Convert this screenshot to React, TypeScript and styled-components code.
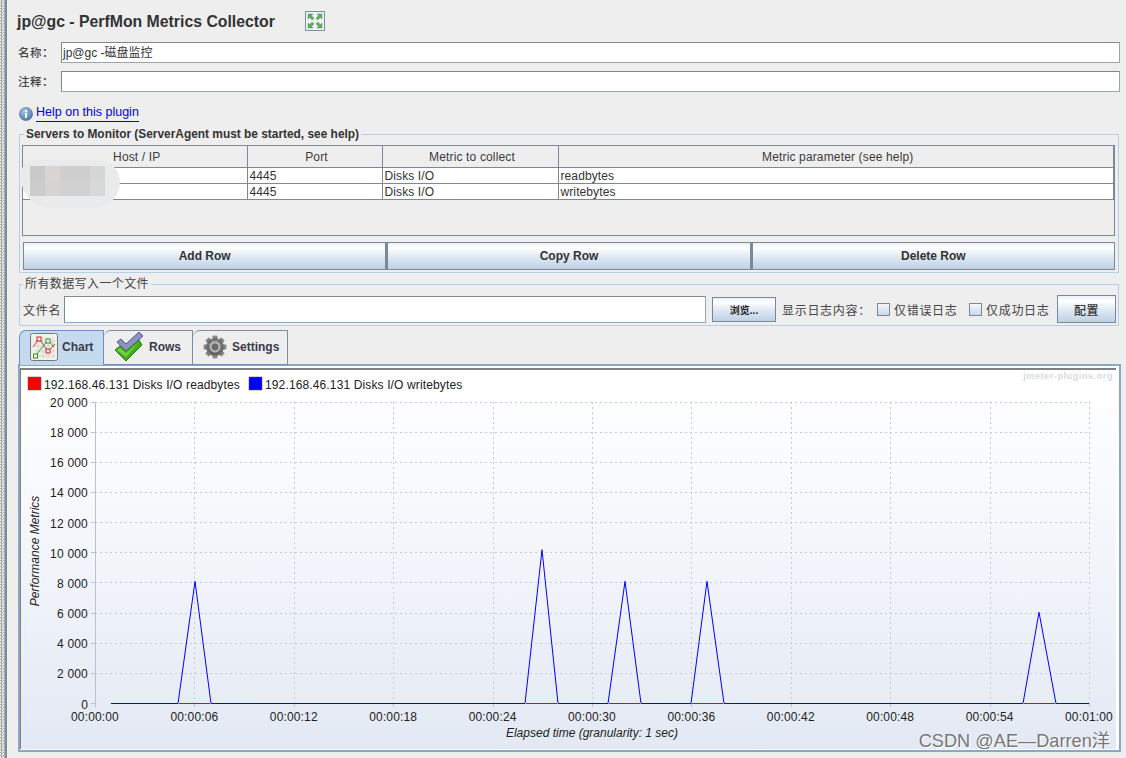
import React from "react";
import styled, { createGlobalStyle } from "styled-components";

const FONT = `"Liberation Sans", Arial, "Noto Sans CJK SC", sans-serif`;

const Global = createGlobalStyle`
  html, body { margin: 0; padding: 0; background: #eeeeee; overflow: hidden; }
  body { font-family: ${FONT}; color: #333; }
  * { box-sizing: border-box; }
`;

const Page = styled.div`
  display: flex;
  width: 1126px;
  height: 758px;
  overflow: hidden;
  background: #eeeeee;
`;
const Strip = styled.div`
  width: 7px;
  flex: none;
  border-right: 2px solid #7c8c9d;
  background: repeating-conic-gradient(#a9a9a9 0 25%, #eeeeee 0 50%) 0 0 / 3px 3px;
`;
const Main = styled.div`
  flex: 1;
  min-width: 0;
  padding: 0 7px 0 12px;
  display: flex;
  flex-direction: column;
`;
const TitleRow = styled.div`
  height: 42px;
  flex: none;
  display: flex;
  align-items: flex-start;
  padding-top: 11px;
`;
const Title = styled.h1`
  margin: 2px 30px 0 -2px;
  font-size: 15.82px;
  line-height: 18px;
  font-weight: 700;
  color: #333;
  white-space: nowrap;
`;
const ExpandBox = styled.span`
  display: block;
  width: 20px;
  height: 20px;
  svg { display: block; }
`;
const FieldRow = styled.div`
  display: flex;
  align-items: center;
  height: 21px;
  margin: 0 -1px 8px -1px;
  flex: none;
`;
const FieldLabel = styled.label`
  width: 43px;
  flex: none;
  margin-top: -1px;
  font-size: 11.5px;
  font-weight: 500;
  color: #444;
  letter-spacing: 0.5px;
`;
const TextBox = styled.div`
  flex: 1;
  height: 100%;
  background: #fff;
  border: 1px solid #9aa5b1;
  border-top: 1px solid #7c8896;
  border-left: 1px solid #7c8896;
  padding: 1px 0 0 1px;
  font-size: 12px;
  line-height: 19px;
  color: #333;
  white-space: nowrap;
`;
const HelpRow = styled.div`
  height: 16px;
  flex: none;
  margin-top: 6px;
  display: flex;
  align-items: flex-start;
  svg { display: block; margin-top: 1px; flex: none; }
`;
const HelpLink = styled.a`
  margin-left: 3px;
  font-size: 12.5px;
  line-height: 12px;
  height: 16px;
  color: #0000ee;
  border-bottom: 1px solid #0000ee;
  white-space: nowrap;
`;
const Group = styled.fieldset<{ $h: number; $mt: number }>`
  margin: ${(p) => p.$mt}px 0 0;
  padding: 4px 2px 0;
  min-width: 0;
  height: ${(p) => p.$h}px;
  flex: none;
  border: 1px solid #b7cfe6;
`;
const BoldLegend = styled.legend`
  margin-left: 2px;
  padding: 0 2px;
  line-height: 14px;
  font-size: 11.9px;
  font-weight: 700;
  color: #333;
  white-space: nowrap;
`;
const CjkLegend = styled.legend`
  margin-left: 1px;
  padding: 0 2px;
  line-height: 14px;
  font-size: 12px;
  letter-spacing: 0.4px;
  color: #444;
  white-space: nowrap;
`;
const TableBox = styled.div`
  position: relative;
  height: 91px;
  background: #eeeeee;
  border: 1px solid #7c8896;
  margin-right: 1px;
`;
const Table = styled.table`
  width: 100%;
  table-layout: fixed;
  border-collapse: collapse;
  font-size: 12px;
  letter-spacing: 0.1px;
`;
const HeadCell = styled.th`
  height: 21px;
  padding: 2px 0 0 4px;
  font-weight: 400;
  text-align: center;
  color: #3a3a3a;
  letter-spacing: 0.15px;
  border-right: 1px solid #7c8896;
  border-bottom: 1px solid #7c8896;
`;
const Cell = styled.td`
  height: 16px;
  padding: 1px 0 0 2px;
  background: #fff;
  color: #333;
  line-height: 14px;
  border-right: 1px solid #7c8896;
  border-bottom: 1px solid #7c8896;
`;
const Blob = styled.div`
  position: absolute;
  left: -2px;
  top: 14px;
  width: 99px;
  height: 48px;
  border-radius: 14px 22px 26px 30px;
  background: #e9eaeb;
  display: grid;
  grid-template-columns: 15px 15px 30px 15px;
  grid-template-rows: 15px 15px;
  padding: 6px 0 0 9px;
`;
const Mosaic = styled.span<{ $c: string }>`
  background: ${(p) => p.$c};
`;
const ButtonRow = styled.div`
  display: flex;
  margin: 6px 1px 0 1px;
  height: 28px;
`;
const GRAD = "linear-gradient(#eaf0f7 0%, #ffffff 18%, #dde8f3 55%, #bed1e5 100%)";
const RowButton = styled.button`
  flex: 1;
  height: 100%;
  margin: 0;
  padding: 0;
  background: ${GRAD};
  border: 1px solid #7c8896;
  font: 700 12px ${FONT};
  color: #333;
  & + & { border-left-width: 2px; }
`;
const FileRow = styled.div`
  display: flex;
  align-items: center;
  height: 28px;
  padding-left: 1px;
`;
const CjkText = styled.span<{ $w: number }>`
  width: ${(p) => p.$w}px;
  flex: none;
  font-size: 12px;
  letter-spacing: 0.7px;
  color: #444;
  white-space: nowrap;
`;
const FileInput = styled.div`
  width: 642px;
  height: 27px;
  flex: none;
  background: #fff;
  border: 1px solid #9aa5b1;
  border-top-color: #7c8896;
  border-left-color: #7c8896;
`;
const BrowseButton = styled.button`
  width: 64px;
  height: 25px;
  flex: none;
  margin: 1px 6px 0;
  padding: 0;
  background: ${GRAD};
  border: 1px solid #7c8896;
  font: 700 10px ${FONT};
  color: #222;
`;
const Check = styled.span`
  width: 13px;
  height: 13px;
  flex: none;
  margin: 1px 4px 0 0;
  border: 1px solid #7c8896;
  background: linear-gradient(#f4f8fb, #c9d9ea);
`;
const ConfigButton = styled.button`
  width: 59px;
  height: 28px;
  flex: none;
  padding: 0;
  background: ${GRAD};
  border: 1px solid #7c8896;
  font: 500 12px ${FONT};
  letter-spacing: 0.5px;
  color: #333;
`;
const Tabs = styled.div`
  display: flex;
  height: 35px;
  flex: none;
  margin-top: 4px;
  position: relative;
  z-index: 1;
`;
const Tab = styled.div<{ $w: number; $active?: boolean }>`
  width: ${(p) => p.$w}px;
  flex: none;
  display: flex;
  align-items: center;
  padding: 0 0 2px 10px;
  border: 1px solid ${(p) => (p.$active ? "#6f90c4" : "#7c8ea3")};
  border-bottom: ${(p) => (p.$active ? "none" : "1px solid #6f90c4")};
  border-left-width: ${(p) => (p.$active ? 1 : 0)}px;
  border-top-left-radius: 7px;
  background: ${(p) => (p.$active ? "#c6daef" : "#eeeeee")};
  font-size: 12px;
  font-weight: 700;
  color: #3a3a4a;
  svg { display: block; flex: none; margin-right: ${(p) => (p.$active ? 4 : 5)}px; }
`;
const Panel = styled.div`
  position: relative;
  flex: none;
  height: 388px;
  margin: -1px -2px 0 -1px;
  padding: 2px 1px 0 0;
  background: #fff;
  border: 2px solid #8ca6c6;
`;
const PanelInner = styled.div`
  height: 381px;
  border-top: 2px solid #808080;
  border-left: 1px solid #808080;
  margin-right: 2px;
  background: linear-gradient(#ffffff 0%, #fbfcfe 20%, #e3e9f4 100%);
  svg { display: block; }
`;
const Watermark = styled.div`
  position: absolute;
  right: 9px;
  bottom: -2px;
  font: 400 18.2px ${FONT};
  color: #777;
  text-shadow: 1px 1px 0 #fff;
  white-space: nowrap;
`;

const X0 = 95, X1 = 1089, Y0 = 703.5, Y1 = 402;
const gx = (i: number) => X0 + ((X1 - X0) * i) / 10;
const gy = (i: number) => Y0 - ((Y0 - Y1) * i) / 10;
const pad = (n: number) => `00:${String(Math.floor(n / 60)).padStart(2, "0")}:${String(n % 60).padStart(2, "0")}`;
const yLabel = (v: number) => (v === 0 ? "0" : `${v / 1000} 000`);

const peaks: [number, number, number, number][] = [
  [178, 195, 211, 8100],
  [525, 542, 558, 10200],
  [608, 625, 641, 8100],
  [691, 707, 724, 8100],
  [1023, 1039, 1056, 6050],
];

const ChartSvg = () => {
  const vy = (v: number) => Y0 - ((Y0 - Y1) * v) / 20000;
  const pts = [`111,${Y0}`];
  peaks.forEach(([a, b, c, v]) => {
    pts.push(`${a},${Y0}`, `${b},${vy(v)}`, `${c},${Y0}`);
  });
  pts.push(`${X1},${Y0}`);
  return (
    <svg width={1095} height={379} viewBox="21 370 1095 379" fontFamily={FONT} fontSize={12} fill="#222">
      <text x={1113} y={379} textAnchor="end" fontSize={9} fontWeight={700} fill="#d5dae2" letterSpacing={0.6}>jmeter-plugins.org</text>
      <rect x={28} y={377} width={13} height={13} fill="#ff0000" stroke="#555" strokeWidth={0.5} />
      <text x={44} y={389} letterSpacing={0.13}>192.168.46.131 Disks I/O readbytes</text>
      <rect x={249} y={377} width={13} height={13} fill="#0000ff" stroke="#555" strokeWidth={0.5} />
      <text x={265} y={389} letterSpacing={0.13}>192.168.46.131 Disks I/O writebytes</text>
      {Array.from({ length: 10 }, (_, i) => (
        <line key={`h${i}`} x1={X0} x2={X1} y1={Math.floor(gy(i + 1)) + 0.5} y2={Math.floor(gy(i + 1)) + 0.5} stroke="#c8cad0" strokeDasharray="2 3" />
      ))}
      {Array.from({ length: 10 }, (_, i) => (
        <line key={`v${i}`} x1={Math.round(gx(i + 1)) + 0.5} x2={Math.round(gx(i + 1)) + 0.5} y1={Y1} y2={Y0} stroke="#c8cad0" strokeDasharray="2 3" />
      ))}
      <line x1={95.5} x2={95.5} y1={Y1} y2={707} stroke="#bcc2cc" />
      {Array.from({ length: 11 }, (_, i) => (
        <line key={`yt${i}`} x1={91} x2={95} y1={Math.floor(gy(i)) + 0.5} y2={Math.floor(gy(i)) + 0.5} stroke="#bcc2cc" />
      ))}
      {Array.from({ length: 11 }, (_, i) => (
        <line key={`xt${i}`} x1={Math.round(gx(i)) + 0.5} x2={Math.round(gx(i)) + 0.5} y1={703} y2={707} stroke="#bcc2cc" />
      ))}
      {Array.from({ length: 11 }, (_, i) => (
        <text key={`yl${i}`} x={88} y={gy(i) + 5} textAnchor="end" letterSpacing={0.2}>{yLabel(i * 2000)}</text>
      ))}
      {Array.from({ length: 11 }, (_, i) => (
        <text key={`xl${i}`} x={gx(i)} y={721} textAnchor="middle" letterSpacing={0.15}>{pad(i * 6)}</text>
      ))}
      <text x={592} y={737} textAnchor="middle" fontStyle="italic">Elapsed time (granularity: 1 sec)</text>
      <text transform="translate(39 551) rotate(-90)" textAnchor="middle" fontStyle="italic">Performance Metrics</text>
      <polyline points={pts.join(" ")} fill="none" stroke="#0000ff" strokeWidth={1} />
      {peaks.map(([a, , c]) => (
        <line key={`r${a}`} x1={a + 1} x2={c - 1} y1={Y0} y2={Y0} stroke="#f00000" strokeWidth={1} />
      ))}
    </svg>
  );
};

const ExpandIcon = () => (
  <svg width={20} height={20} viewBox="0 0 20 20">
    <rect x={0.5} y={0.5} width={19} height={19} fill="#eef1f3" stroke="#7f8e9b" />
    <g fill="#5fae5a" stroke="#3f8a45" strokeWidth={0.4}>
      <path d="M3 3h5l-1.6 1.6L9 7.2 7.2 9 4.6 6.4 3 8z" />
      <path d="M17 3h-5l1.6 1.6L11 7.2 12.8 9l2.6-2.6L17 8z" />
      <path d="M3 17h5l-1.6-1.6L9 12.8 7.2 11l-2.6 2.6L3 12z" />
      <path d="M17 17h-5l1.6-1.6-2.6-2.6 1.8-1.8 2.6 2.6L17 12z" />
    </g>
  </svg>
);
const InfoIcon = () => (
  <svg width={14} height={14} viewBox="0 0 14 14">
    <defs>
      <radialGradient id="ig" cx="40%" cy="30%" r="80%">
        <stop offset="0" stopColor="#a9c4e4" />
        <stop offset="1" stopColor="#3f6ea8" />
      </radialGradient>
    </defs>
    <circle cx={7} cy={7} r={6.6} fill="url(#ig)" stroke="#5d7fa8" strokeWidth={0.7} />
    <rect x={6} y={6} width={2} height={5} fill="#fff" />
    <rect x={6} y={3} width={2} height={2} fill="#fff" />
  </svg>
);
const ChartIcon = () => (
  <svg width={28} height={28} viewBox="0 0 28 28">
    <rect x={0.5} y={0.5} width={27} height={27} rx={2} fill="#f1f1ec" stroke="#777" />
    <path d="M4 8h21M4 13h21M4 18h21M4 23h21M8 4v21M13 4v21M18 4v21M23 4v21" stroke="#d4d4d0" />
    <polyline points="3,14 9,6 18,18 25,11" fill="none" stroke="#d83a3a" />
    <polyline points="3,24 6,22 18,7 24,14" fill="none" stroke="#4a9a3a" />
    <g fill="#f3f3ee" strokeWidth={1}>
      <rect x={7} y={4} width={4} height={4} stroke="#d02020" />
      <rect x={16} y={16} width={4} height={4} stroke="#d02020" />
      <rect x={16} y={6} width={4} height={4} stroke="#3a9020" />
      <rect x={3.5} y={21} width={4} height={4} stroke="#3a9020" />
    </g>
  </svg>
);
const RowsIcon = () => (
  <svg width={30} height={30} viewBox="0 0 30 30">
    <path d="M3 10l4-3 5 5L25 0l4 4-17 16z" fill="#8f90c6" stroke="#55578f" strokeWidth={1} strokeLinejoin="round" />
    <path d="M1 18l5-4 6 5L25 8l3 5-16 16z" fill="#3fae1e" stroke="#2d7a18" strokeWidth={1} strokeLinejoin="round" />
    <path d="M3 18l3-2 6 5L25 10l-13 15z" fill="#6fd040" />
  </svg>
);
const GearIcon = () => (
  <svg width={24} height={24} viewBox="0 0 24 24">
    <defs>
      <linearGradient id="gg" x1="0" y1="0" x2="0" y2="1">
        <stop offset="0" stopColor="#9a9a9a" />
        <stop offset="1" stopColor="#5c5c5c" />
      </linearGradient>
    </defs>
    <circle cx={12} cy={12} r={9} fill="url(#gg)" />
    <g fill="url(#gg)">
      {[0, 45, 90, 135, 180, 225, 270, 315].map((a) => (
        <rect key={a} x={9.5} y={0.5} width={5} height={5} rx={0.8} transform={`rotate(${a} 12 12)`} />
      ))}
    </g>
    <circle cx={12} cy={12} r={5.4} fill="#b9b9b9" />
    <circle cx={12} cy={12} r={3.4} fill="#6a6a6a" />
  </svg>
);

export default function App() {
  return (
    <Page>
      <Global />
      <Strip />
      <Main>
        <TitleRow>
          <Title>jp@gc - PerfMon Metrics Collector</Title>
          <ExpandBox><ExpandIcon /></ExpandBox>
        </TitleRow>
        <FieldRow>
          <FieldLabel>名称：</FieldLabel>
          <TextBox>jp@gc -磁盘监控</TextBox>
        </FieldRow>
        <FieldRow>
          <FieldLabel>注释：</FieldLabel>
          <TextBox />
        </FieldRow>
        <HelpRow>
          <InfoIcon />
          <HelpLink>Help on this plugin</HelpLink>
        </HelpRow>
        <Group $h={146} $mt={5}>
          <BoldLegend>Servers to Monitor (ServerAgent must be started, see help)</BoldLegend>
          <TableBox>
            <Table>
              <colgroup>
                <col style={{ width: 224 }} />
                <col style={{ width: 135 }} />
                <col style={{ width: 176 }} />
                <col />
              </colgroup>
              <thead>
                <tr>
                  <HeadCell>Host / IP</HeadCell>
                  <HeadCell>Port</HeadCell>
                  <HeadCell>Metric to collect</HeadCell>
                  <HeadCell>Metric parameter (see help)</HeadCell>
                </tr>
              </thead>
              <tbody>
                <tr><Cell /><Cell>4445</Cell><Cell>Disks I/O</Cell><Cell>readbytes</Cell></tr>
                <tr><Cell /><Cell>4445</Cell><Cell>Disks I/O</Cell><Cell>writebytes</Cell></tr>
              </tbody>
            </Table>
            <Blob>
              <Mosaic $c="#c9c9c9" /><Mosaic $c="#d8d5d2" /><Mosaic $c="#cfcfd0" /><Mosaic $c="#d6d6d6" />
              <Mosaic $c="#cccccc" /><Mosaic $c="#d6d4d2" /><Mosaic $c="#d1d1d2" /><Mosaic $c="#d8d8d8" />
            </Blob>
          </TableBox>
          <ButtonRow>
            <RowButton>Add Row</RowButton>
            <RowButton>Copy Row</RowButton>
            <RowButton>Delete Row</RowButton>
          </ButtonRow>
        </Group>
        <Group $h={49} $mt={4}>
          <CjkLegend>所有数据写入一个文件</CjkLegend>
          <FileRow>
            <CjkText $w={41}>文件名</CjkText>
            <FileInput />
            <BrowseButton>浏览...</BrowseButton>
            <CjkText $w={95}>显示日志内容：</CjkText>
            <Check />
            <CjkText $w={75}>仅错误日志</CjkText>
            <Check />
            <CjkText $w={71}>仅成功日志</CjkText>
            <ConfigButton>配置</ConfigButton>
          </FileRow>
        </Group>
        <Tabs>
          <Tab $w={85} $active><ChartIcon />Chart</Tab>
          <Tab $w={89}><RowsIcon />Rows</Tab>
          <Tab $w={95}><GearIcon />Settings</Tab>
        </Tabs>
        <Panel>
          <PanelInner>
            <ChartSvg />
          </PanelInner>
          <Watermark>CSDN @AE—Darren洋</Watermark>
        </Panel>
      </Main>
    </Page>
  );
}
